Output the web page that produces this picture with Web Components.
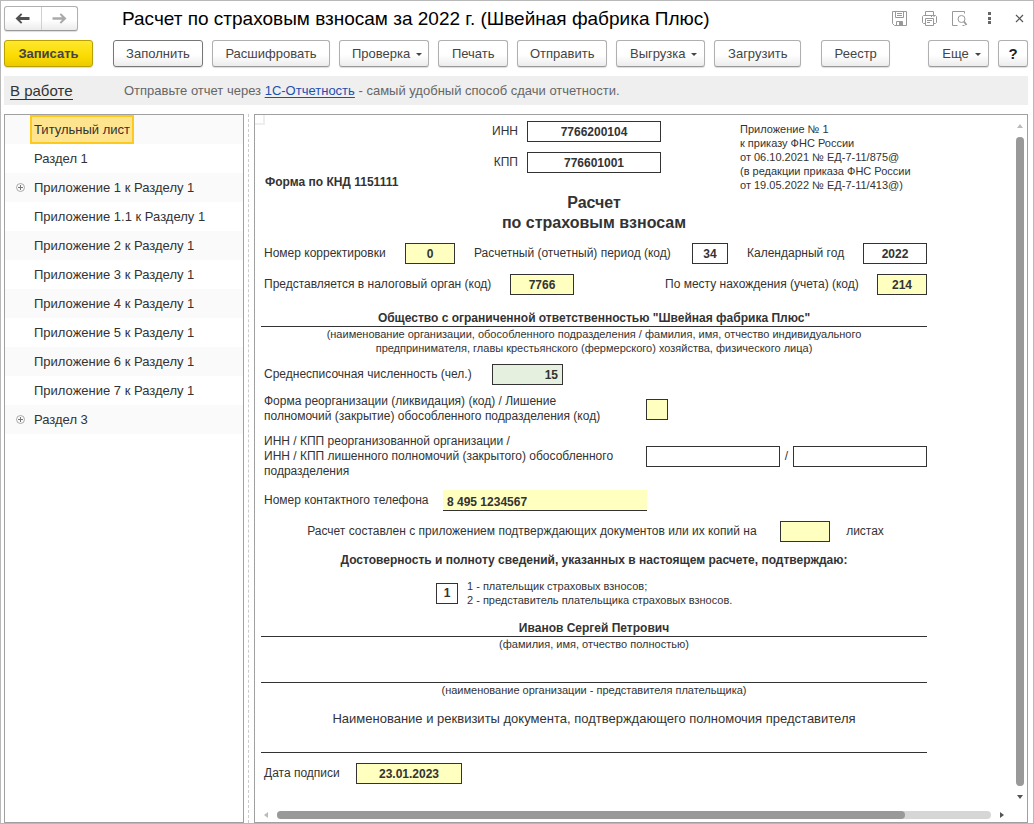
<!DOCTYPE html>
<html lang="ru">
<head>
<meta charset="utf-8">
<meta name="viewport" content="width=device-width, initial-scale=1">
<title>Расчет по страховым взносам</title>
<style>
html, body { margin: 0; }
body { font-family: "Liberation Sans", Arial, sans-serif; font-size: 13px; color: #333; background: #fff; }
</style>
</head>
<body>
<app-window></app-window>
<script>
class Base extends HTMLElement {
  constructor() {
    super();
    this.attachShadow({ mode: 'open' });
  }
  connectedCallback() {
    this.shadowRoot.innerHTML = '<style>*{box-sizing:border-box}' + this.css() + '</style>' + this.html();
  }
  attr(name, fallback = '') { return this.getAttribute(name) ?? fallback; }
}

/* Push button of the command bar; variants: primary, strong, help; "menu" adds a caret */
customElements.define('tool-button', class extends Base {
  css() { return `
    :host { display: block; min-width: var(--w); }
    button { display: flex; align-items: center; justify-content: center; gap: 6px; height: 27px; width: 100%;
      padding: 0 8px; font: inherit; font-size: 13px; color: #444; white-space: nowrap; cursor: pointer;
      background: linear-gradient(#fff 55%, #ececec); border: 1px solid #b0b0b0; border-bottom-color: #999;
      border-radius: 3px; box-shadow: 0 1px 1px #ddd; }
    :host([variant=primary]) button { font-weight: bold; background: linear-gradient(#ffe82e, #fbdb00 60%, #eccb00);
      border-color: #b8a000; }
    :host([variant=strong]) button { border-color: #777; }
    :host([variant=help]) button { font-weight: bold; font-size: 15px; color: #222; }
    :host([menu]) button { padding: 0 6px 0 12px; }
    i { border: 3px solid transparent; border-top-color: #444; border-bottom: 0; margin-top: 2px; }`; }
  html() { return `<button type="button"><slot></slot>${this.hasAttribute('menu') ? '<i></i>' : ''}</button>`; }
});

customElements.define('nav-history', class extends Base {
  css() { return `
    :host { display: flex; width: 74px; height: 25px; border: 1px solid #b0b0b0; border-bottom-color: #999;
      border-radius: 3px; background: linear-gradient(#fff 55%, #ececec); box-shadow: 0 1px 1px #ddd; box-sizing: border-box; }
    button { flex: 1; padding: 0; border: 0; background: none; display: grid; place-items: center; color: #505050; }
    button + button { border-left: 1px solid #d0d0d0; color: #aaa; }
    svg { display: block; fill: currentColor; }`; }
  html() { return `
    <button type="button" aria-label="Назад"><svg width="15" height="11" viewBox="0 0 15 11"><path d="M.5 5.500 6 0.300 7.300 1.500 5 4H14.500V7H5L7.300 9.500 6 10.700z"/></svg></button>
    <button type="button" aria-label="Вперед"><svg width="15" height="11" viewBox="0 0 15 11"><path d="M14.500 5.500 9 0.300 7.700 1.500 10 4.300H.5V6.700H10L7.700 9.500 9 10.700z"/></svg></button>`; }
});

const ICONS = {
  save: '<path d="M1.500 1.500h14v14h-12l-2-2zM4.500 1.500v6h8v-6M6 3.500h5M6 5.500h5M5.500 15.500v-4h6v4"/><path d="M8 12h3v3H8z" fill="currentColor" stroke="none"/>',
  print: '<path d="M4.500 5.500v-4h8v4M4.500 13.500h-2l-1-1v-6l1-1h12l1 1v6l-1 1h-2M4.500 8.500h8v7h-8zM6 10.500h5M6 12.500h3M10 6.500h1M12.500 6.500h1"/>',
  preview: '<path d="M6.500 15.500h-5v-14h12v2M13.500 15.500h-2"/><circle cx="10.500" cy="9" r="3.500"/><path d="M13 11.500l2.500 3.500" stroke-width="1.800"/>',
  more: '<path d="M7 2h3v3H7zM7 7h3v3H7zM7 11h3v3H7z" fill="#666" stroke="none"/>',
  close: '<path d="M5 5l7 7M12 5l-7 7" stroke="#555" stroke-width="1.200"/>'
};
customElements.define('icon-button', class extends Base {
  css() { return `
    :host { display: block; }
    button { display: block; padding: 0; border: 0; background: none; color: #999; }
    svg { display: block; fill: none; stroke: currentColor; }`; }
  html() { return `<button type="button" aria-label="${this.attr('label')}"><svg width="17" height="17" viewBox="0 0 17 17">${ICONS[this.attr('icon')]}</svg></button>`; }
});

customElements.define('status-strip', class extends Base {
  css() { return `
    :host { display: flex; align-items: center; height: 29px; padding: 0 6px; background: #efefef; color: #666; }
    .state { width: 114px; }
    .state a { font-size: 15px; color: #333; text-decoration: none; border-bottom: 1px solid #333; }
    p { margin: 0; }
    p a { color: #1c4fb0; text-decoration: underline; text-underline-offset: 2px; }`; }
  html() { return `<div class="state"><a href="#state">В работе</a></div>
    <p>Отправьте отчет через <a href="#service">1С-Отчетность</a> - самый удобный способ сдачи отчетности.</p>`; }
});

customElements.define('tree-item', class extends Base {
  css() { return `
    :host { display: flex; align-items: center; height: 29px; }
    :host(:nth-child(odd)) { background: #fafafa; }
    .mark { width: 25px; display: grid; justify-content: end; padding-right: 5px; }
    .mark svg { display: block; }
    .name { height: 29px; padding: 0 2px; font: inherit; color: inherit; background: none; border: 2px solid transparent; }
    :host([selected]) .name { background: #ffe48f; border-color: #fcc91e; }
    .mark button { padding: 0; border: 0; background: none; }`; }
  html() { return `<span class="mark">${this.hasAttribute('expandable') ? '<button type="button" aria-label="Развернуть"><svg width="9" height="9" viewBox="0 0 9 9" fill="none" stroke="#aaa"><circle cx="4.500" cy="4.500" r="4"/><path d="M2 4.500h5M4.500 2v5" stroke="#777"/></svg></button>' : ''}</span><button type="button" class="name"><slot></slot></button>`; }
});

customElements.define('section-tree', class extends Base {
  css() { return `:host { display: block; border: 1px solid #a0a0a0; box-sizing: border-box; }`; }
  html() { return `<nav aria-label="Разделы">
    <tree-item selected>Титульный лист</tree-item>
    <tree-item>Раздел 1</tree-item>
    <tree-item expandable>Приложение 1 к Разделу 1</tree-item>
    <tree-item>Приложение 1.1 к Разделу 1</tree-item>
    <tree-item>Приложение 2 к Разделу 1</tree-item>
    <tree-item>Приложение 3 к Разделу 1</tree-item>
    <tree-item>Приложение 4 к Разделу 1</tree-item>
    <tree-item>Приложение 5 к Разделу 1</tree-item>
    <tree-item>Приложение 6 к Разделу 1</tree-item>
    <tree-item>Приложение 7 к Разделу 1</tree-item>
    <tree-item expandable>Раздел 3</tree-item></nav>`; }
});

/* Labelled cell: slot holds the caption, --w the box width, --gap the distance between them, --lw the least caption width */
customElements.define('form-field', class extends Base {
  css() { return `
    :host { display: flex; align-items: center; }
    label { margin-right: var(--gap, 16px); min-width: var(--lw, 0); line-height: 15px; white-space: nowrap; }
    :host([grow]) label { flex: 1; }
    input { width: var(--w, 50px); height: 21px; padding: 0 4px; border: 1px solid #333; border-radius: 0; outline: 0;
      font: bold 12px "Liberation Sans", Arial, sans-serif; color: #333; text-align: center; background: #fff; }
    :host([tone=edit]) input { background: #ffffc0; }
    :host([tone=calc]) input { background: #e6f0de; text-align: right; }
    :host([line]) input { border-width: 0 0 1px; text-align: left; padding-top: 4px; }
    .suffix { margin-left: 16px; }`; }
  html() {
    const label = this.textContent.trim() ? '<label for="f"><slot></slot></label>' : '';
    const aria = label ? '' : `aria-label="${this.attr('name')}"`;
    const suffix = this.hasAttribute('suffix') ? `<span class="suffix">${this.attr('suffix')}</span>` : '';
    return `${label}<input id="f" type="text" ${aria} value="${this.attr('value')}">${suffix}`;
  }
});

/* Ruled line with a value above it and a caption under it */
customElements.define('ruled-line', class extends Base {
  css() { return `
    :host { display: block; text-align: center; }
    .value { min-height: 16px; line-height: 15px; font-weight: bold; border-bottom: 1px solid #333; }
    .note { font-size: 11px; line-height: 14px; }`; }
  html() { return `<div class="value"><slot></slot></div><div class="note"><slot name="note"></slot></div>`; }
});

customElements.define('scroll-bar', class extends Base {
  css() { return `
    :host { display: flex; align-items: center; gap: 9px; }
    :host([vertical]) { flex-direction: column; }
    .track { flex: 1; height: 8px; border-radius: 4px; background: #d6d6d6; }
    .thumb { height: 8px; width: var(--size); border-radius: 4px; background: #999; }
    :host([vertical]) .track { width: 8px; height: auto; display: flex; }
    :host([vertical]) .thumb { width: 8px; height: auto; }
    i { border: 3px solid transparent; }
    .l { border-right: 4px solid #bbb; border-left: 0; } .r { border-left: 4px solid #555; border-right: 0; }
    .u { border-bottom: 4px solid #bbb; border-top: 0; } .d { border-top: 4px solid #555; border-bottom: 0; }`; }
  html() {
    const v = this.hasAttribute('vertical');
    return `<i class="${v ? 'u' : 'l'}"></i><div class="track"><div class="thumb"></div></div><i class="${v ? 'd' : 'r'}"></i>`;
  }
});

customElements.define('report-form', class extends Base {
  css() { return `
    :host { display: grid; grid-template-columns: 1fr auto; grid-template-rows: 1fr auto; border: 1px solid #a0a0a0; box-sizing: border-box; font-size: 12px; line-height: 15px; position: relative; }
    .corner { position: absolute; left: 0; top: 0; width: 10px; height: 10px; border: solid #eee; border-width: 0 2px 2px 0; }
    form { padding: 6px 89px 16px 6px; min-width: 0; }
    .top { display: grid; grid-template-columns: 1fr 170px 79px 187px; align-items: start; }
    .ids { display: grid; gap: 10px; justify-items: end; }
    .note { grid-column: 4; font-size: 11px; line-height: 14px; padding-top: 1px; white-space: nowrap; }
    .knd { align-self: end; font-weight: bold; padding: 0 0 2px 4px; }
    h1 { margin: 1px 0 0; font-size: 16px; line-height: 20px; text-align: center; }
    .row { display: flex; justify-content: space-between; padding-left: 3px; margin-top: 10px; }
    .start { justify-content: flex-start; }
    .mid { justify-content: center; }
    .pair { align-items: center; }
    .center { text-align: center; margin: 11px 0 0; }
    .pay { display: flex; align-items: center; gap: 9px; font-size: 11px; line-height: 14px; margin: 11px 0 0 175px; }
    .pay p { margin: 0; }
    .doc { font-size: 13px; margin: 14px 0 11px; }
    .sp9 { margin-top: 9px; } .sp11 { margin-top: 11px; } .sp14 { margin-top: 14px; } .sp16 { margin-top: 16px; }
    .v { margin: 9px 3px 12px 0; } .h { margin: 0 12px 3px 9px; }`; }
  html() { return `<span class="corner"></span>
  <form>
    <div class="top">
      <div class="knd">Форма по КНД 1151111</div>
      <div class="ids">
        <form-field style="--w:134px;--gap:9px" value="7766200104">ИНН</form-field>
        <form-field style="--w:134px;--gap:9px" value="776601001">КПП</form-field>
      </div>
      <div class="note">Приложение № 1<br>к приказу ФНС России<br>от 06.10.2021 № ЕД-7-11/875@<br>(в редакции приказа ФНС России<br>от 19.05.2022 № ЕД-7-11/413@)</div>
    </div>
    <h1>Расчет<br>по страховым взносам</h1>
    <div class="row">
      <form-field tone="edit" style="--lw:127px;--gap:14px" value="0">Номер корректировки</form-field>
      <form-field style="--w:36px;--lw:202px" value="34">Расчетный (отчетный) период (код)</form-field>
      <form-field style="--w:64px;--lw:100px" value="2022">Календарный год</form-field>
    </div>
    <div class="row">
      <form-field tone="edit" style="--w:64px;--lw:232px;--gap:14px" value="7766">Представляется в налоговый орган (код)</form-field>
      <form-field tone="edit" style="--lw:196px" value="214">По месту нахождения (учета) (код)</form-field>
    </div>
    <ruled-line class="sp16">Общество с ограниченной ответственностью "Швейная фабрика Плюс"<span slot="note">(наименование организации, обособленного подразделения / фамилия, имя, отчество индивидуального<br>предпринимателя, главы крестьянского (фермерского) хозяйства, физического лица)</span></ruled-line>
    <div class="row start sp9"><form-field tone="calc" style="--w:71px;--lw:212px" value="15">Среднесписочная численность (чел.)</form-field></div>
    <div class="row start sp9"><form-field grow tone="edit" style="--w:22px;width:404px" value="">Форма реорганизации (ликвидация) (код) / Лишение<br>полномочий (закрытие) обособленного подразделения (код)</form-field></div>
    <div class="row pair">
      <form-field grow style="--w:134px;width:516px" value="">ИНН / КПП реорганизованной организации /<br>ИНН / КПП лишенного полномочий (закрытого) обособленного<br>подразделения</form-field>
      <form-field style="--w:134px;--gap:5px" value="">/</form-field>
    </div>
    <div class="row start sp11"><form-field tone="edit" line style="--w:204px;--lw:169px;--gap:10px" value="8 495 1234567">Номер контактного телефона</form-field></div>
    <div class="row mid"><form-field tone="edit" suffix="листах" style="--lw:457px" value="">Расчет составлен с приложением подтверждающих документов или их копий на</form-field></div>
    <p class="center"><b>Достоверность и полноту сведений, указанных в настоящем расчете, подтверждаю:</b></p>
    <div class="pay"><form-field name="Кто подтверждает" style="--w:22px" value="1"></form-field><p>1 - плательщик страховых взносов;<br>2 - представитель плательщика страховых взносов.</p></div>
    <ruled-line class="sp14">Иванов Сергей Петрович<span slot="note">(фамилия, имя, отчество полностью)</span></ruled-line>
    <ruled-line class="sp16"><span slot="note">(наименование организации - представителя плательщика)</span></ruled-line>
    <p class="center doc">Наименование и реквизиты документа, подтверждающего полномочия представителя</p>
    <ruled-line></ruled-line>
    <div class="row start"><form-field tone="edit" style="--w:106px;--lw:78px;--gap:14px" value="23.01.2023">Дата подписи</form-field></div>
  </form>
  <scroll-bar vertical class="v"></scroll-bar>
  <scroll-bar class="h" style="--size:88%"></scroll-bar>`; }
});

customElements.define('app-window', class extends Base {
  css() { return `
    :host { display: flex; flex-direction: column; min-height: 100vh; box-sizing: border-box; border: 1px solid #b8b8b8; padding: 5px 5px 0 3px; }
    header { display: flex; align-items: center; height: 25px; }
    h2 { flex: 1; margin: 0 0 0 44px; font-size: 19px; font-weight: normal; color: #000; white-space: nowrap; }
    .icons { display: flex; gap: 13px; }
    .bar { display: flex; gap: 9px; margin-top: 9px; }
    .gap { margin-left: 11px; } .push { margin-left: auto; }
    status-strip { margin-top: 9px; }
    main { flex: 1; display: grid; grid-template-columns: 240px 10px 1fr; margin-top: 9px; }
    .split { width: 0; margin-left: 4px; border-left: 1px dashed #ccc; }`; }
  html() { return `
    <header><nav-history></nav-history><h2>Расчет по страховым взносам за 2022 г. (Швейная фабрика Плюс)</h2>
      <div class="icons"><icon-button icon="save" label="Сохранить"></icon-button><icon-button icon="print" label="Печать"></icon-button><icon-button icon="preview" label="Просмотр"></icon-button><icon-button icon="more" label="Меню"></icon-button><icon-button icon="close" label="Закрыть"></icon-button></div>
    </header>
    <div class="bar">
      <tool-button variant="primary" style="--w:89px">Записать</tool-button>
      <tool-button variant="strong" class="gap" style="--w:90px">Заполнить</tool-button>
      <tool-button style="--w:118px">Расшифровать</tool-button>
      <tool-button menu style="--w:90px">Проверка</tool-button>
      <tool-button style="--w:70px">Печать</tool-button>
      <tool-button style="--w:90px">Отправить</tool-button>
      <tool-button menu style="--w:89px">Выгрузка</tool-button>
      <tool-button style="--w:87px">Загрузить</tool-button>
      <tool-button class="gap" style="--w:69px">Реестр</tool-button>
      <tool-button menu class="push" style="--w:61px">Еще</tool-button>
      <tool-button variant="help" style="--w:30px">?</tool-button>
    </div>
    <status-strip></status-strip>
    <main><section-tree></section-tree><div class="split"></div><report-form></report-form></main>`; }
});
</script>
</body>
</html>
